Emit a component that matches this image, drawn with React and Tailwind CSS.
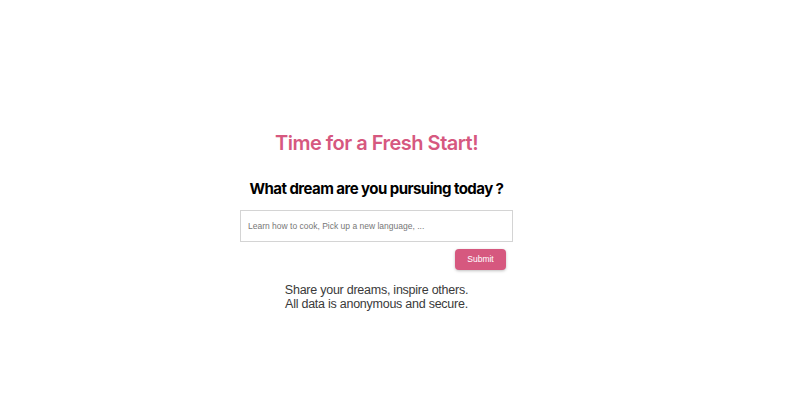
import React from 'react';

const App = () => {
  return (
    <div className="w-[753px] h-[412px] bg-white flex flex-col items-center pt-[130px]">
      {/* Heading */}
      <h1 className="text-[20px] leading-[26px] font-semibold tracking-[-0.5px] text-[#d6587f] font-['Inter',sans-serif]">
        Time for a Fresh Start!
      </h1>
      <h2 className="mt-[22px] text-[15px] leading-[22px] font-bold tracking-[-0.55px] text-black font-['Inter',sans-serif]">
        What dream are you pursuing today ?
      </h2>

      {/* Form */}
      <div className="mt-[10px] w-[273px] flex flex-col items-end">
        <input
          type="text"
          placeholder="Learn how to cook, Pick up a new language, ..."
          className="w-full h-[32px] px-[7px] border border-[#d4d4d4] text-[8.5px] font-['Liberation_Sans',sans-serif] placeholder:text-[#777] outline-none"
        />
        <button className="mt-[7px] mr-[7px] w-[51px] h-[21px] rounded-[4px] bg-[#d6587f] text-white text-[8.5px] font-['Liberation_Sans',sans-serif] shadow-[0_1px_3px_rgba(0,0,0,0.25)]">
          Submit
        </button>
      </div>

      {/* Footer note */}
      <p className="mt-[13px] text-center text-[12.5px] leading-[14px] tracking-[-0.25px] text-[#3a3a3a] font-['Liberation_Sans',sans-serif]">
        Share your dreams, inspire others.
        <br />
        All data is anonymous and secure.
      </p>
    </div>
  );
};

export default App;
